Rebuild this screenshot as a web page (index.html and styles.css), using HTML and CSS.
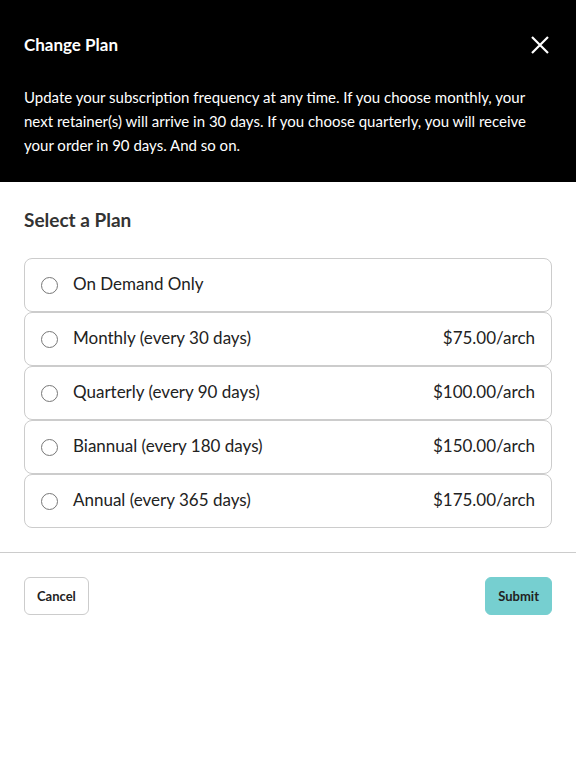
FILE: index.html
```html
<!DOCTYPE html>
<html>
<head>
<meta charset="utf-8">
<link rel="stylesheet" href="styles.css">
</head>
<body>
<div class="modal">
  <header class="head">
    <div class="head-top">
      <h1 class="title">Change Plan</h1>
      <button class="close" aria-label="Close">
        <svg width="18" height="18" viewBox="0 0 18 18"><path d="M1 1L17 17M17 1L1 17" stroke="#fff" stroke-width="2.2" fill="none"/></svg>
      </button>
    </div>
    <p class="desc">Update your subscription frequency at any time. If you choose monthly, your next retainer(s) will arrive in 30 days. If you choose quarterly, you will receive your order in 90 days. And so on.</p>
  </header>
  <section class="body">
    <h2 class="subtitle">Select a Plan</h2>
    <div class="plans">
      <label class="plan"><span class="radio"></span><span class="name">On Demand Only</span></label>
      <label class="plan"><span class="radio"></span><span class="name">Monthly (every 30 days)</span><span class="price">$75.00/arch</span></label>
      <label class="plan"><span class="radio"></span><span class="name">Quarterly (every 90 days)</span><span class="price">$100.00/arch</span></label>
      <label class="plan"><span class="radio"></span><span class="name">Biannual (every 180 days)</span><span class="price">$150.00/arch</span></label>
      <label class="plan"><span class="radio"></span><span class="name">Annual (every 365 days)</span><span class="price">$175.00/arch</span></label>
    </div>
  </section>
  <footer class="foot">
    <button class="btn cancel">Cancel</button>
    <button class="btn submit">Submit</button>
  </footer>
</div>
</body>
</html>
```
FILE: styles.css
```css
* { box-sizing: border-box; }
html, body { margin: 0; padding: 0; background: #fff; }
body { font-family: "Lato", "Liberation Sans", sans-serif; color: #333; }
.head { background: #000; color: #fff; padding: 33px 24px 25px; height: 182px; }
.head-top { display: flex; justify-content: space-between; align-items: center; height: 24px; }
.title { margin: 0; font-size: 17px; font-weight: 700; line-height: 24px; }
.close { background: none; border: 0; padding: 0; margin-right: 3px; display: flex; cursor: pointer; }
.desc { margin: 28px 0 0; font-size: 15px; line-height: 24px; }
.body { padding: 25px 24px 24px; border-bottom: 1px solid #ccc; }
.subtitle { margin: 0 0 25px; font-size: 19px; font-weight: 700; line-height: 26px; color: #333; }
.plans { display: flex; flex-direction: column; }
.plan { display: flex; align-items: center; height: 54px; border: 1px solid #ccc; border-radius: 8px; padding: 0 16px; font-size: 17px; color: #222; }
.radio { width: 17px; height: 17px; border: 1px solid #777; border-radius: 50%; margin-right: 15px; flex: none; margin-top: 1px; }
.name, .price { padding-bottom: 3px; }
.name { flex: 1; }
.price { text-align: right; }
.foot { display: flex; justify-content: space-between; padding: 24px; }
.btn { font-family: inherit; font-size: 13px; font-weight: 700; height: 38px; border-radius: 6px; padding: 0 12px; color: #222; cursor: pointer; }
.cancel { background: #fff; border: 1px solid #ccc; }
.submit { background: #76cfd0; border: 1px solid #76cfd0; }
```
